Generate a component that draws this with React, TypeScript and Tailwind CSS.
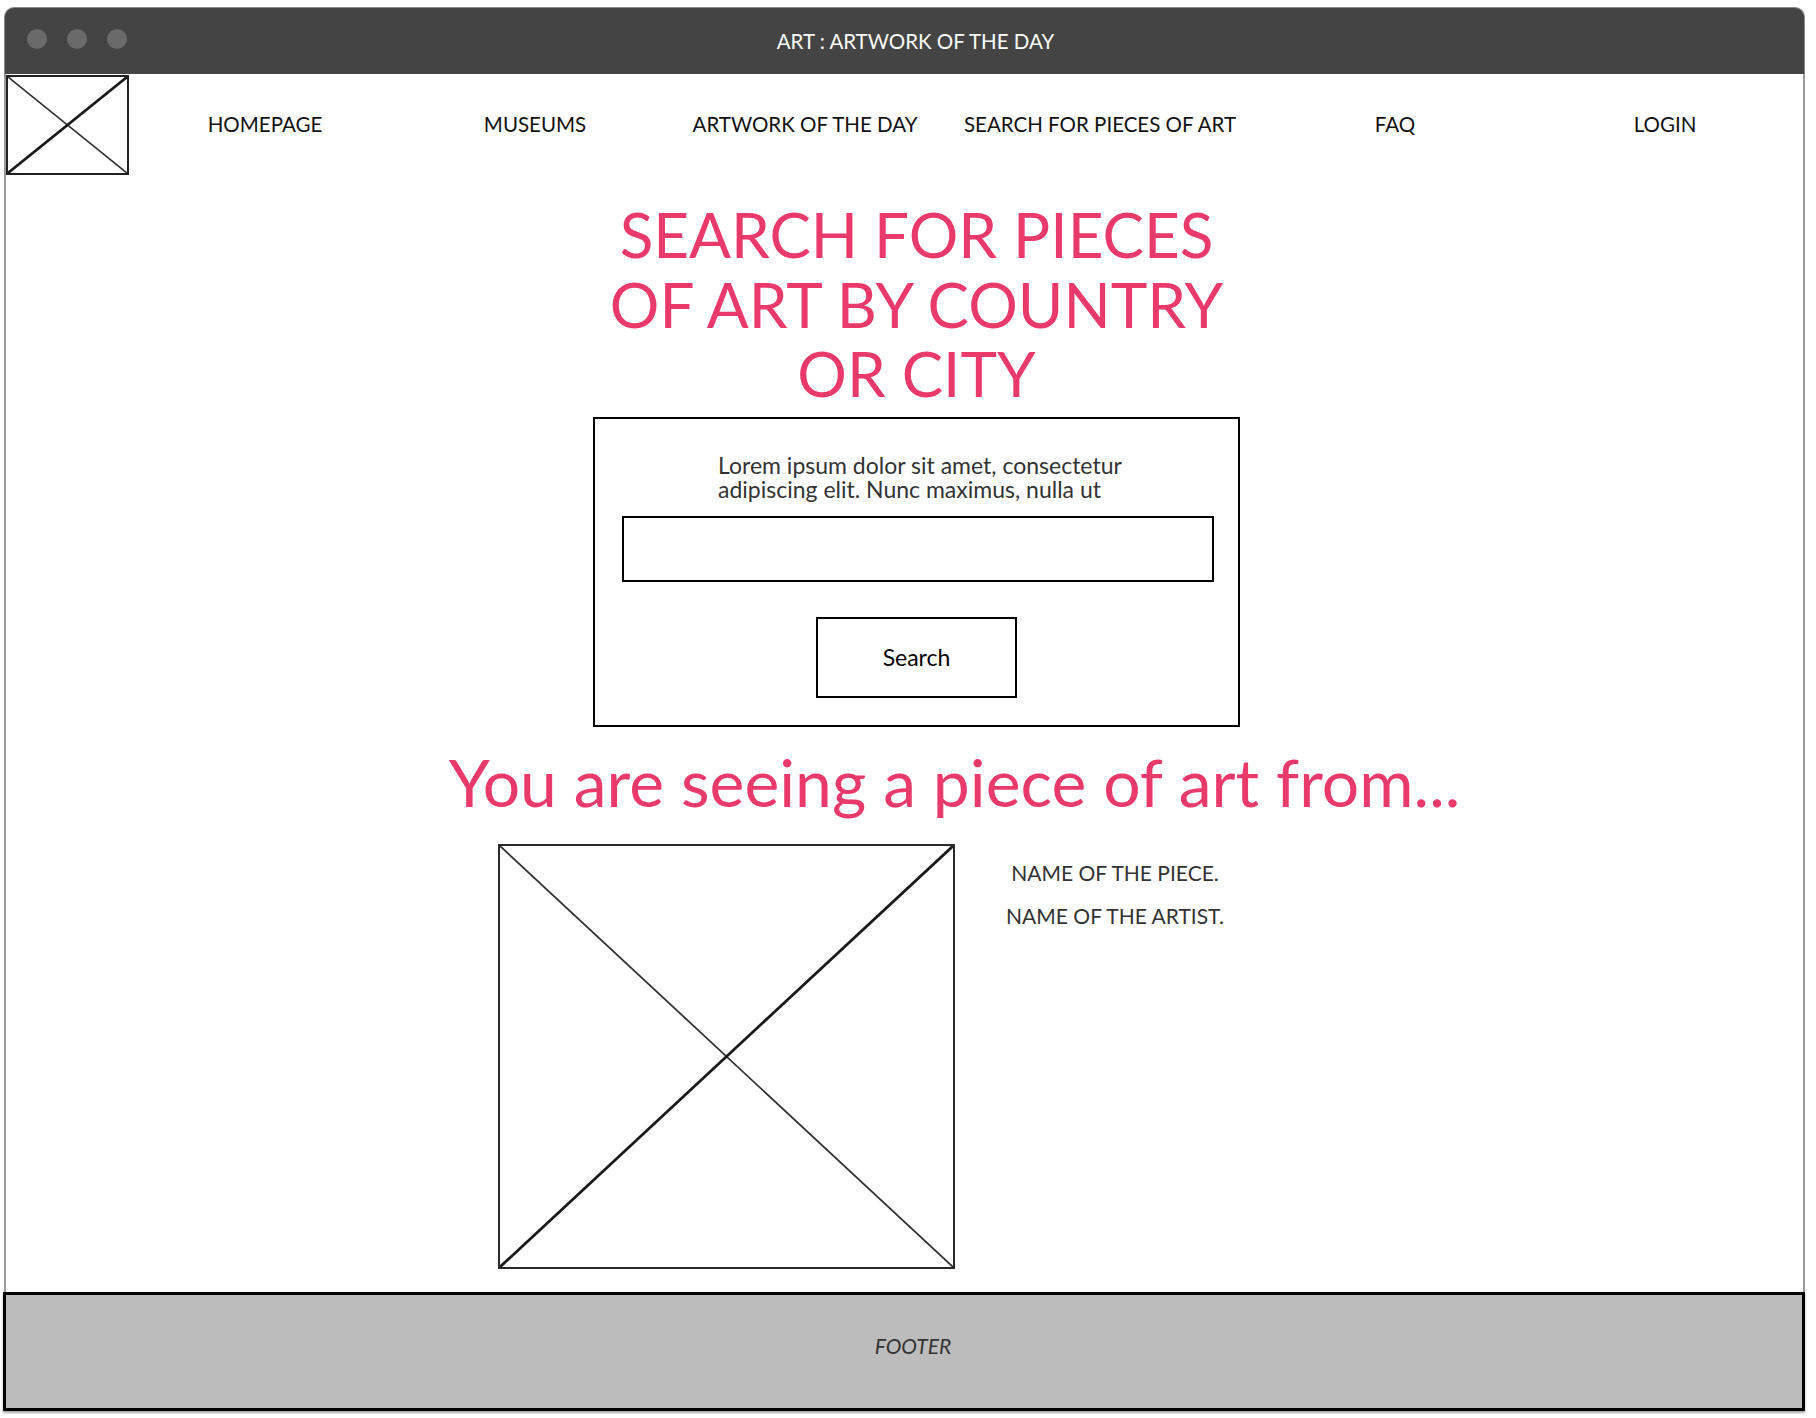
import React from "react";

function XBox({ w, h, className }: { w: number; h: number; className?: string }) {
  return (
    <div className={className}>
      <svg width="100%" height="100%" viewBox={`0 0 ${w} ${h}`} preserveAspectRatio="none" className="block">
        <line x1="0" y1="0" x2={w} y2={h} stroke="#333333" strokeWidth="1.8" />
        <line x1="0" y1={h} x2={w} y2="0" stroke="#1a1a1a" strokeWidth="2.8" />
      </svg>
    </div>
  );
}

const navItems: { label: string; w: string }[] = [
  { label: "HOMEPAGE", w: "w-[272px]" },
  { label: "MUSEUMS", w: "w-[268px]" },
  { label: "ARTWORK OF THE DAY", w: "w-[272px]" },
  { label: "SEARCH FOR PIECES OF ART", w: "w-[318px]" },
  { label: "FAQ", w: "w-[272px]" },
  { label: "LOGIN", w: "w-[268px]" },
];

export default function App() {
  return (
    <div className="w-[1816px] h-[1418px] bg-white font-['Lato',sans-serif] overflow-hidden">
      <div className="ml-[4px] pt-[7px] w-[1801px] flex flex-col">
        {/* Title bar */}
        <div className="relative h-[67px] bg-[#444444] rounded-t-[10px] border-t border-x border-[#8a8a8a] flex items-center justify-center pl-[22px]">
          <div className="absolute left-[22px] top-[21px] flex gap-[20px]">
            <span className="w-[20px] h-[20px] rounded-full bg-[#6a6a6a]" />
            <span className="w-[20px] h-[20px] rounded-full bg-[#6a6a6a]" />
            <span className="w-[20px] h-[20px] rounded-full bg-[#6a6a6a]" />
          </div>
          <span className="text-white text-[20.5px]">ART : ARTWORK OF THE DAY</span>
        </div>

        {/* Body */}
        <div className="h-[1218px] border-x-2 border-[#9a9a9a] flex flex-col">
          {/* Nav */}
          <div className="flex items-center h-[101px] pt-[1px]">
            <XBox w={123} h={100} className="w-[123px] h-[100px] border-2 border-[#222] shrink-0" />
            {navItems.map((n) => (
              <div key={n.label} className={`${n.w} shrink-0 text-center text-[20.5px] text-[#111] pb-[2px]`}>
                {n.label}
              </div>
            ))}
          </div>

          {/* Main */}
          <div className="flex flex-col items-center pl-[24px]">
            <h1 className="mt-[25px] text-center text-[62px] leading-[69.5px] text-[#ea3a6b]">
              SEARCH FOR PIECES
              <br />
              OF ART BY COUNTRY
              <br />
              OR CITY
            </h1>

            <div className="mt-[8px] w-[647px] h-[310px] border-2 border-black flex flex-col items-center">
              <p className="mt-[34px] ml-[9px] text-[23px] leading-[24.5px] text-[#333] text-left w-[406px]">
                Lorem ipsum dolor sit amet, consectetur
                <br />
                adipiscing elit. Nunc maximus, nulla ut
              </p>
              <div className="mt-[14px] w-[592px] h-[66px] border-2 border-black ml-[3px]" />
              <div className="mt-[35px] w-[201px] h-[81px] border-2 border-black flex items-center justify-center text-[23px] text-black">
                Search
              </div>
            </div>

            <h2 className="mt-[16px] ml-[76px] text-[66px] leading-[78px] text-[#ea3a6b]">
              You are seeing a piece of art from...
            </h2>

            <div className="self-stretch flex mt-[23px] pl-[468px]">
              <XBox w={457} h={425} className="w-[457px] h-[425px] border-2 border-[#2a2a2a] shrink-0" />
              <div className="w-[320px] flex flex-col items-center text-[21px] text-[#333] pt-[16px] gap-[17px] leading-[26px]">
                <span>NAME OF THE PIECE.</span>
                <span>NAME OF THE ARTIST.</span>
              </div>
            </div>
          </div>
        </div>

        {/* Footer */}
        <div className="-ml-[1px] w-[1802px] h-[119px] bg-[#bcbcbc] border-[3px] border-black flex items-center justify-center pb-[12px] pl-[18px] shadow-[0_2px_2px_rgba(0,0,0,0.35)]">
          <span className="italic text-[21px] text-[#333]">FOOTER</span>
        </div>
      </div>
    </div>
  );
}
